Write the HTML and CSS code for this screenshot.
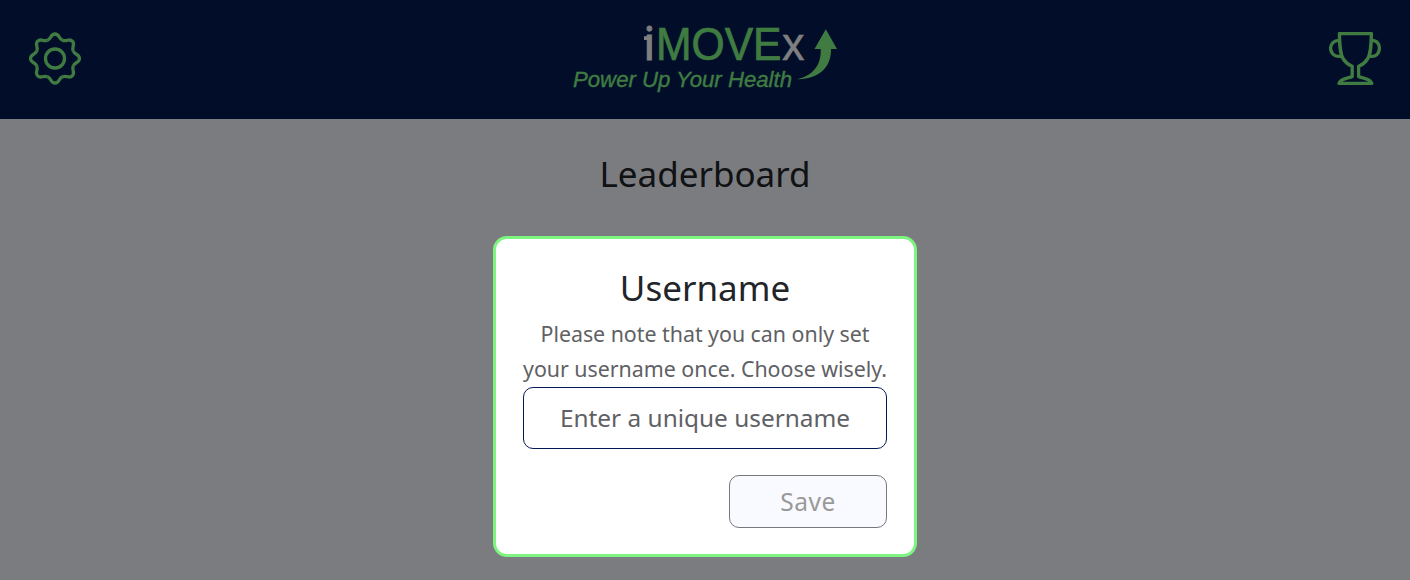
FILE: index.html
```html
<!DOCTYPE html>
<html lang="en">
<head>
<meta charset="utf-8">
<title>iMOVEx</title>
<link rel="stylesheet" href="styles.css">
</head>
<body>
<header class="topbar">
  <svg class="icon" viewBox="-26 -26 52 52" aria-label="Settings">
    <defs><path id="tooth" d="M18.2 -7.54C20.04 -3.1 24.5 -4.7 24.5 0C24.5 4.7 20.04 3.1 18.2 7.54"/></defs>
    <use href="#tooth"/><use href="#tooth" transform="rotate(45)"/><use href="#tooth" transform="rotate(90)"/><use href="#tooth" transform="rotate(135)"/><use href="#tooth" transform="rotate(180)"/><use href="#tooth" transform="rotate(225)"/><use href="#tooth" transform="rotate(270)"/><use href="#tooth" transform="rotate(315)"/>
    <circle r="9.5"/>
  </svg>
  <svg class="logo" viewBox="570 10 270 97">
    <text class="logo-i" x="643.4" y="60.2">i</text>
    <path class="logo-light" d="M644 36.2h5v3.8h-5z"/>
    <text class="logo-name logo-green" x="656" y="60.2" textLength="125.5" lengthAdjust="spacingAndGlyphs">MOVE</text>
    <text class="logo-name logo-light" x="782" y="60.2" textLength="22.5" lengthAdjust="spacingAndGlyphs">x</text>
    <text class="logo-tag" x="573" y="86.8" textLength="219" lengthAdjust="spacingAndGlyphs">Power Up Your Health</text>
    <path class="logo-green" d="M825.8 29.3L837 49H831C831.5 66 820 79.5 797 79.2C812 76 821.5 66 820.7 49H814.5Z"/>
  </svg>
  <svg class="icon" viewBox="0 0 52 53" aria-label="Leaderboard">
    <path d="M10.4 1.6H42.4C42.2 13 42 21.5 38.5 27C36.3 30.5 34 32.5 29.6 34.2V44.5C32.5 46.3 41.6 46.3 42.8 51.4H10C11.2 46.3 20.3 46.3 23.2 44.5V34.2C18.8 32.5 16.5 30.5 14.3 27C10.8 21.5 10.6 13 10.4 1.6Z"/>
    <path d="M10.6 8.3C4.8 8 1.6 12 1.6 16.3C1.6 21.5 6 25.7 12.6 24.1M42.2 8.3C48 8 50.4 12 50.4 16.3C50.4 21.5 46.8 25.7 40.2 24.1"/>
  </svg>
</header>
<main class="page"><h1 class="title">Leaderboard</h1></main>
<div class="backdrop">
  <section class="modal" role="dialog">
    <h2 class="modal-title">Username</h2>
    <p class="note">Please note that you can only set<br>your username once. Choose wisely.</p>
    <input class="field" placeholder="Enter a unique username">
    <button class="save" disabled>Save</button>
  </section>
</div>
</body>
</html>
```
FILE: styles.css
```css
* { box-sizing: border-box; }
body { margin: 0; height: 580px; overflow: hidden; background: #f7f8ff; color: #212529; font-family: "Noto Sans", sans-serif; }
.topbar { height: 119px; padding: 0 29px 2px; background: #041a54; display: flex; align-items: center; justify-content: space-between; }
.icon { width: 52px; height: 53px; fill: none; stroke: #80f884; stroke-width: 3.3; stroke-linejoin: round; }
.logo { width: 270px; height: 97px; }
.logo-name { font: 46.5px "Liberation Sans", sans-serif; }
.logo-i { font: 45px "Noto Sans", sans-serif; fill: #fff; stroke: #fff; stroke-width: 1; }
.logo-light { fill: #fff; }
.logo-name.logo-light { stroke: #fff; stroke-width: .4; }
.logo-green, .logo-tag { fill: #80f884; }
.logo-name.logo-green { stroke: #80f884; stroke-width: .7; }
.logo-tag { font: italic 22px "Liberation Sans", sans-serif; stroke: #80f884; stroke-width: .3; }
.title, .modal-title { margin: 0; font-size: 35px; font-weight: 400; line-height: 44px; text-align: center; }
.title { padding-top: 33px; }
.backdrop { position: absolute; inset: 0; background: rgba(0, 0, 0, .5); display: flex; justify-content: center; align-items: flex-start; padding-top: 236px; }
.modal { width: 424px; height: 321px; padding: 27px 27px 0; border: 3px solid #7ff581; border-radius: 14px; background: #fff; display: flex; flex-direction: column; }
.note { margin: 6px 0 1px; font-size: 21.4px; line-height: 35px; text-align: center; color: #5f6164; white-space: nowrap; letter-spacing: -.03px; }
.field { height: 62px; border: 1px solid #041a54; border-radius: 10px; background: #fff; text-align: center; padding: 0 0 2px; font: 24.4px "Noto Sans", sans-serif; }
.field::placeholder { color: #5f6164; opacity: 1; }
.save { align-self: flex-end; width: 158px; height: 53px; margin-top: 26px; padding: 0 0 1px; border: 1px solid #77787c; border-radius: 10px; background: #f9faff; color: #999; font: 24.5px "Noto Sans", sans-serif; letter-spacing: .5px; }
```
